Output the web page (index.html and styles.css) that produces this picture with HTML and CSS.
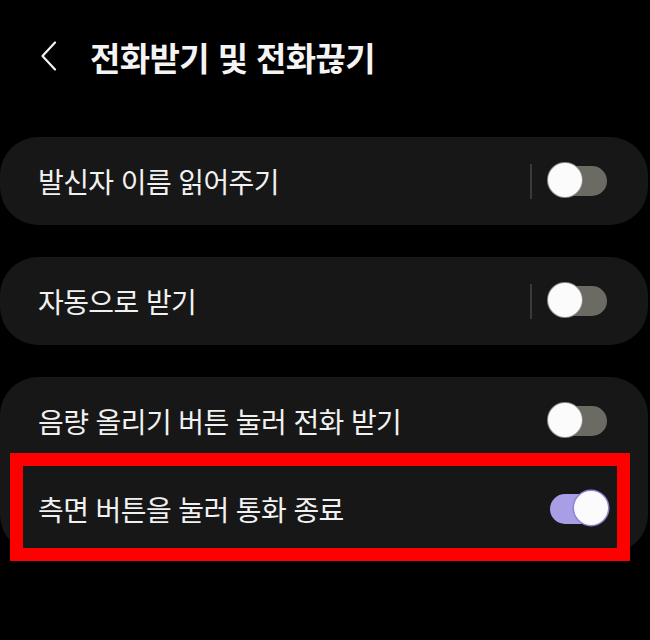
FILE: index.html
```html
<!DOCTYPE html>
<html lang="ko">
<head>
<meta charset="utf-8">
<link rel="stylesheet" href="styles.css">
</head>
<body>
<div class="screen">
  <header class="header">
    <span class="back">
      <svg width="18" height="30" viewBox="0 0 18 30"><path d="M15 1.5 L2.5 15 L15 28.5" fill="none" stroke="#f2f2f2" stroke-width="2.2" stroke-linecap="round" stroke-linejoin="round"/></svg>
    </span>
    <h1 class="title">전화받기 및 전화끊기</h1>
  </header>

  <section class="card">
    <div class="row">
      <span class="label">발신자 이름 읽어주기</span>
      <span class="divider"></span>
      <span class="switch"><span class="thumb"></span></span>
    </div>
  </section>

  <section class="card">
    <div class="row">
      <span class="label">자동으로 받기</span>
      <span class="divider"></span>
      <span class="switch"><span class="thumb"></span></span>
    </div>
  </section>

  <section class="card">
    <div class="row">
      <span class="label">음량 올리기 버튼 눌러 전화 받기</span>
      <span class="switch"><span class="thumb"></span></span>
    </div>
    <div class="row row-marked">
      <span class="label">측면 버튼을 눌러 통화 종료</span>
      <span class="switch on"><span class="thumb"></span></span>
      <span class="mark"></span>
    </div>
  </section>
</div>
</body>
</html>
```

FILE: styles.css
```css
html, body {
  margin: 0;
  padding: 0;
  background: #000;
}
.screen {
  width: 650px;
  height: 640px;
  background: #000;
  font-family: "Noto Sans CJK KR", "Noto Sans", sans-serif;
  color: #f1f1f1;
  overflow: hidden;
}
.header {
  display: flex;
  align-items: center;
  height: 114px;
  padding-left: 40px;
  box-sizing: border-box;
}
.back {
  display: flex;
  width: 18px;
  height: 30px;
  margin-right: 32px;
  margin-top: -2px;
}
.title {
  margin: 0;
  font-size: 33px;
  font-weight: 700;
  letter-spacing: -0.6px;
  color: #f4f4f4;
  line-height: 1;
}
.card {
  width: 648px;
  background: #171717;
  border-radius: 38px;
  margin-top: 23px;
  margin-bottom: 32px;
}
.card + .card {
  margin-top: 0;
}
.row {
  position: relative;
  display: flex;
  align-items: center;
  height: 88px;
  padding: 0 41px 0 38px;
  box-sizing: border-box;
}
.label {
  flex: 1;
  font-size: 28px;
  letter-spacing: -0.6px;
  color: #f1f1f1;
  line-height: 1;
}
.divider {
  width: 2px;
  height: 35px;
  background: #3a3a3a;
  margin-right: 18px;
}
.switch {
  position: relative;
  width: 57px;
  height: 30px;
  border-radius: 15px;
  background: #6b6b64;
}
.switch .thumb {
  position: absolute;
  top: -3px;
  left: -2px;
  width: 34px;
  height: 34px;
  border-radius: 50%;
  background: #fbfbfb;
  box-shadow: 0 0 0 1px #8a8a86, 0 0 2px rgba(0,0,0,0.5);
}
.switch.on {
  background: #a89ee6;
}
.switch.on .thumb {
  left: auto;
  right: -1px;
  box-shadow: 0 0 0 1.5px #8d83d6;
}
.mark {
  position: absolute;
  left: 10px;
  top: -12px;
  width: 620px;
  height: 108px;
  box-sizing: border-box;
  border: 13px solid #ff0000;
}
```
